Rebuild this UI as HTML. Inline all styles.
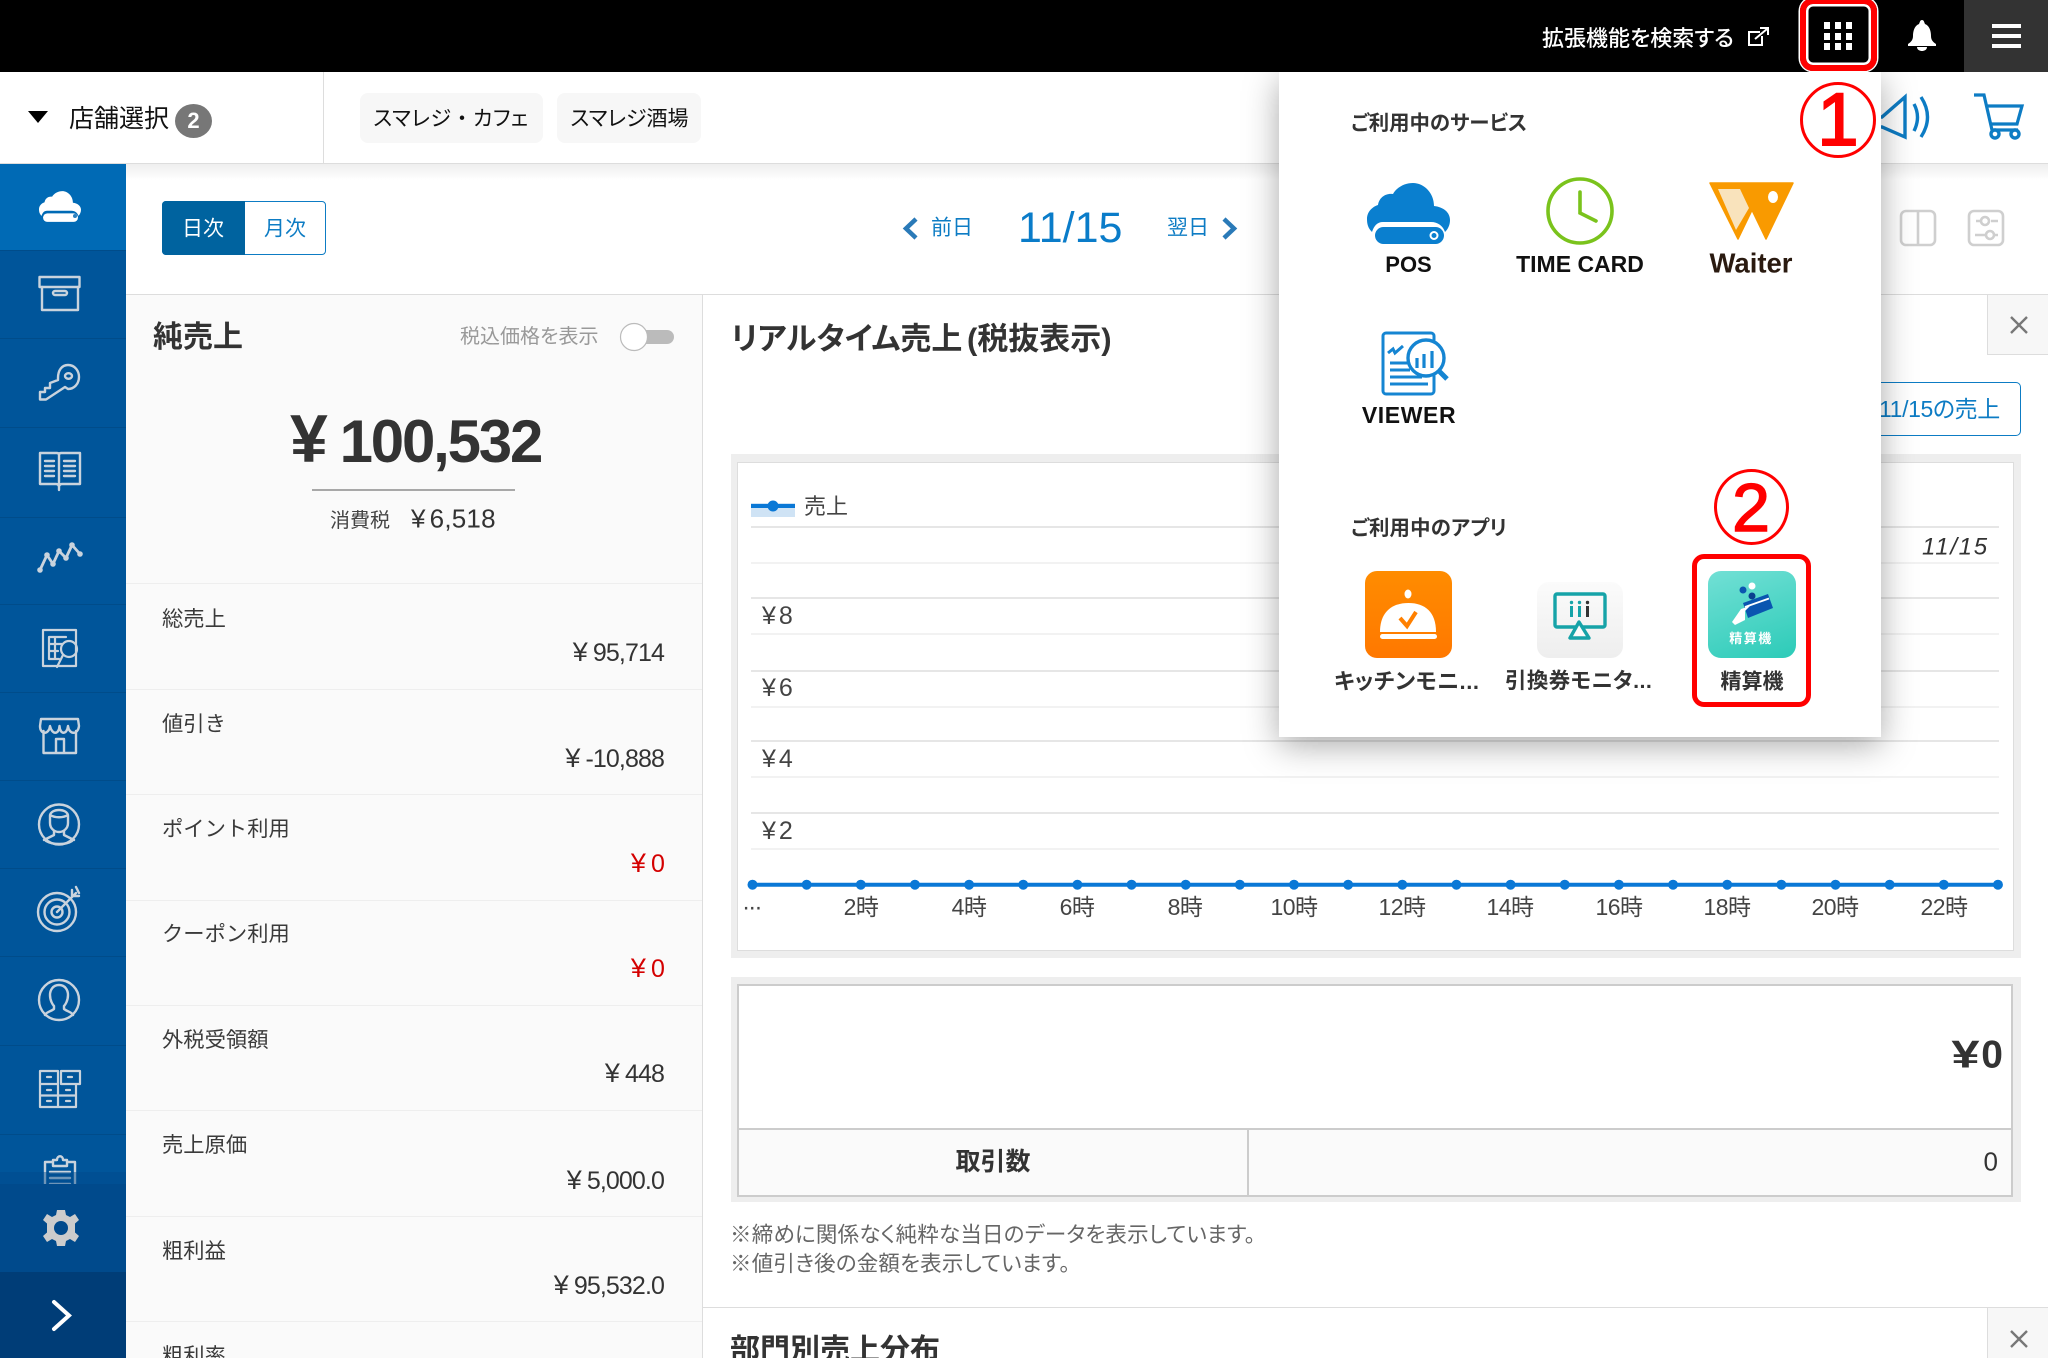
<!DOCTYPE html>
<html lang="ja"><head><meta charset="utf-8"><title>売上</title>
<style>
html,body{margin:0;padding:0;background:#fff}
#p{position:relative;width:2048px;height:1358px;overflow:hidden;background:#fff;font-family:"Liberation Sans","Noto Sans CJK JP",sans-serif;color:#333}
#p div,#p svg{position:absolute}
.t{position:absolute;white-space:nowrap;line-height:1.2;transform:translateY(-50%);font-feature-settings:"palt"}
.r{transform:translate(-100%,-50%)}
.c{transform:translate(-50%,-50%)}
.l{font-size:21.300px;left:162px;color:#3a3a3a;font-feature-settings:normal}
.v{font-size:25px;color:#333;letter-spacing:-.9px}
.v i{font-style:normal;font-size:27px;margin-right:6px}
.red{color:#d40000}
.g{font-size:23px;color:#444;letter-spacing:-.5px}
.n{font-size:25px;color:#444;letter-spacing:3px}
.b{font-weight:700}
</style></head><body><div id="p">
<div style="left:0;top:0;width:2048px;height:72px;background:#000"></div>
<div style="left:1964px;top:0;width:84px;height:72px;background:#333"></div>
<div style="left:0;top:72px;width:2048px;height:91px;background:#fff;border-bottom:1px solid #ddd"></div>
<div style="left:323px;top:72px;width:1px;height:91px;background:#ddd"></div>
<div style="left:360px;top:93px;width:183px;height:50px;background:#f7f7f7;border-radius:8px"></div>
<div style="left:557px;top:93px;width:144px;height:50px;background:#f7f7f7;border-radius:8px"></div>
<div style="left:126px;top:164px;width:1922px;height:16px;background:linear-gradient(#eee,#fff)"></div>
<div style="left:126px;top:294px;width:1922px;height:1px;background:#ddd"></div>
<div style="left:126px;top:295px;width:576px;height:1063px;background:#fafafa;border-right:1px solid #ddd"></div>
<div style="left:126px;top:583px;width:576px;height:1px;background:#eee"></div>
<div style="left:126px;top:689px;width:576px;height:1px;background:#eee"></div>
<div style="left:126px;top:794px;width:576px;height:1px;background:#eee"></div>
<div style="left:126px;top:900px;width:576px;height:1px;background:#eee"></div>
<div style="left:126px;top:1005px;width:576px;height:1px;background:#eee"></div>
<div style="left:126px;top:1110px;width:576px;height:1px;background:#eee"></div>
<div style="left:126px;top:1216px;width:576px;height:1px;background:#eee"></div>
<div style="left:126px;top:1321px;width:576px;height:1px;background:#eee"></div>
<div style="left:0;top:164px;width:126px;height:1194px;background:#00559a"></div>
<div style="left:0;top:164px;width:126px;height:86px;background:#006ab5"></div>
<div style="left:0;top:250px;width:126px;height:1px;background:#004c8a"></div>
<div style="left:0;top:338px;width:126px;height:1px;background:#004c8a"></div>
<div style="left:0;top:427px;width:126px;height:1px;background:#004c8a"></div>
<div style="left:0;top:517px;width:126px;height:1px;background:#004c8a"></div>
<div style="left:0;top:604px;width:126px;height:1px;background:#004c8a"></div>
<div style="left:0;top:692px;width:126px;height:1px;background:#004c8a"></div>
<div style="left:0;top:780px;width:126px;height:1px;background:#004c8a"></div>
<div style="left:0;top:868px;width:126px;height:1px;background:#004c8a"></div>
<div style="left:0;top:956px;width:126px;height:1px;background:#004c8a"></div>
<div style="left:0;top:1045px;width:126px;height:1px;background:#004c8a"></div>
<div style="left:0;top:1134px;width:126px;height:1px;background:#004c8a"></div>
<!-- segment -->
<div style="left:162px;top:201px;width:164px;height:54px;box-sizing:border-box;border:1px solid #0d7cc4;border-radius:4px;background:#fff"></div>
<div style="left:162px;top:201px;width:83px;height:54px;background:#00639f;border-radius:4px 0 0 4px"></div>
<!-- chart -->
<div style="left:731px;top:454px;width:1290px;height:504px;background:#eee"></div>
<div style="left:737px;top:462px;width:1275px;height:487px;background:#fff;border:1px solid #ddd"></div>
<div style="left:731px;top:977px;width:1290px;height:225px;background:#eee"></div>
<div style="left:737px;top:984px;width:1272px;height:144px;background:#fff;border:2px solid #ccc;border-bottom:none"></div>
<div style="left:737px;top:1128px;width:1272px;height:65px;background:#fafafa;border:2px solid #ccc"></div>
<div style="left:1247px;top:1128px;width:2px;height:67px;background:#ccc"></div>
<div style="left:703px;top:1307px;width:1345px;height:1px;background:#ddd"></div>
<div style="left:1987px;top:294px;width:61px;height:61px;box-sizing:border-box;background:#f7f7f7;border-left:1px solid #ddd;border-bottom:1px solid #ddd;border-top:1px solid #ddd"></div>
<div style="left:1987px;top:1307px;width:61px;height:51px;box-sizing:border-box;background:#f7f7f7;border-left:1px solid #ddd;border-top:1px solid #ddd"></div>
<div style="left:1800px;top:382px;width:221px;height:54px;box-sizing:border-box;background:#fff;border:1.500px solid #0d7cc4;border-radius:5px"></div>
<div style="left:751px;top:503px;width:44px;height:14px;background:#cfe3f5"></div>

<svg width="2048" height="1358" viewBox="0 0 2048 1358" style="left:0;top:0">
<defs><symbol id="cl" viewBox="0 0 83 61" overflow="visible"><path d="M5,49 C1,45 0,41 0,36 C0,29 5,24 11,22 C12,15 18,10 26,11 C30,4 38,0 46,0 C57,0 67,10 67,23 C76,24 83,29 83,37 C83,42 81,46 78,49 C76,43 71,39 64,39 L16,39 C10,39 7,43 5,49 Z"/><rect x="8" y="44" width="69" height="17" rx="8.500"/></symbol></defs>
<g fill="none" stroke-width="1.500">
<path d="M751 527H1999M751 598H1999M751 671H1999M751 741H1999M751 813H1999" stroke="#ddd"/>
<path d="M751 563H1999M751 634H1999M751 707H1999M751 777H1999M751 849H1999" stroke="#eee"/>
</g>
<path d="M751 506H795" stroke="#0a78d6" stroke-width="4"/><circle cx="773" cy="506" r="5.500" fill="#0a78d6"/>
<path d="M752.500 884.700H2000" stroke="#0a78d6" stroke-width="4"/>
<path d="M752.500 884.700H2001" stroke="#0a78d6" stroke-width="10" stroke-linecap="round" stroke-dasharray="0 54.150"/>
<path d="M2011 317L2027 333M2027 317L2011 333M2011 1331L2027 1347M2027 1331L2011 1347" stroke="#777" stroke-width="2.400" fill="none"/>
<g fill="none" stroke="#cfcfcf" stroke-width="2.600">
<rect x="1901" y="211" width="34" height="34" rx="5"/><path d="M1918 211V245"/>
<rect x="1969" y="211" width="34" height="34" rx="5"/><path d="M1976 221H1981M1991 221H1998M1975 235H1985M1995 235H1998"/><circle cx="1985" cy="221" r="4"/><circle cx="1990" cy="235" r="4"/>
</g>
<!-- nav chevrons -->
<path d="M916 219L906 228.500L916 238M1224 219L1234 228.500L1224 238" fill="none" stroke="#2a7ab8" stroke-width="4.500"/>
<!-- speaker + cart -->
<g fill="none" stroke="#0d7cc4" stroke-width="3.400">
<path d="M1870 117H1882L1905 97V137L1882 127H1870"/><path d="M1914 104Q1921 117 1914 131M1921 97Q1934 117 1921 137"/>
<path d="M1974 95H1984L1992 130H2018M1986 106H2022L2017 124H1990" stroke-width="3.200"/><circle cx="1995" cy="134" r="4"/><circle cx="2015" cy="134" r="4"/>
</g>
<!-- topbar icons -->
<path d="M1760 32H1749V45H1762V36M1755 39L1767 29M1760 28H1768V35" fill="none" stroke="#fff" stroke-width="2"/>
<g fill="#fff"><rect x="1824" y="22" width="6" height="7"/><rect x="1835" y="22" width="6" height="7"/><rect x="1846" y="22" width="6" height="7"/><rect x="1824" y="33" width="6" height="7"/><rect x="1835" y="33" width="6" height="7"/><rect x="1846" y="33" width="6" height="7"/><rect x="1824" y="43" width="6" height="7"/><rect x="1835" y="43" width="6" height="7"/><rect x="1846" y="43" width="6" height="7"/>
<path d="M1922 20C1924 20 1924 22 1925 24C1930 26 1931 32 1931 36C1931 40 1933 42 1936 44V46H1908V44C1911 42 1913 40 1913 36C1913 32 1914 26 1919 24C1920 22 1920 20 1922 20ZM1917 47H1927C1927 50 1924 51 1922 51C1920 51 1917 50 1917 47Z"/>
<rect x="1992" y="24" width="29" height="4"/><rect x="1992" y="34" width="29" height="4"/><rect x="1992" y="44" width="29" height="4"/></g>
<path d="M28 111H48L38 123Z" fill="#000"/>
<!-- toggle -->
<rect x="630" y="330" width="44" height="14" rx="7" fill="#bbb"/><circle cx="634" cy="337" r="13.500" fill="#fff" stroke="#bbb" stroke-width="1.200"/>
<path d="M312 490H515" stroke="#777" stroke-width="1.300"/>
<!-- sidebar -->
<use href="#cl" x="39" y="191" width="42" height="31" fill="#fff"/><circle cx="75" cy="216" r="2" fill="#2a80c0"/>
<g fill="none" stroke="#c9d3dd" stroke-width="2.400" stroke-linejoin="round" stroke-linecap="round">
<rect x="39.500" y="277" width="40" height="10"/><path d="M42 287V310H78V287"/><rect x="53" y="291" width="14" height="4" rx="2"/>
<path d="M58 378C58 370 62 365 68 365C75 365 79 371 79 377C79 384 74 389 68 389L65 387L46 399.500H40V392H45V388H50V383L58 380Z"/><ellipse cx="68.500" cy="376" rx="3.500" ry="2.800"/>
<path d="M40 453H57Q59 453 59 455Q59 453 61 453H80V484H62Q59 484 59 487Q59 484 56 484H40ZM59 455V490M45 461H54M45 466H54M45 471H54M45 476H54M64 461H75M64 466H75M64 471H75M64 476H75"/>
<path d="M40 570L47 555L53 564L59 551L66 558L72 545L80 554" stroke-width="2.800"/><g fill="#c9d3dd" stroke="none"><circle cx="40" cy="570" r="2.800"/><circle cx="47" cy="555" r="2.800"/><circle cx="53" cy="564" r="2.800"/><circle cx="59" cy="551" r="2.800"/><circle cx="66" cy="558" r="2.800"/><circle cx="72" cy="545" r="2.800"/><circle cx="80" cy="554" r="2.800"/></g>
<g stroke-width="2.200"><rect x="43" y="630" width="33" height="36"/><path d="M49 637H66M49 637V659H59M49 644H62M49 651H58M55 637V658"/><circle cx="69" cy="649" r="8"/><path d="M63 655L57 667"/></g>
<path d="M41 719H78L79 726C78 735 69 735 68 726C67 735 60 735 59.500 726C59 735 52 735 50 726C49 735 40 735 40 726ZM43.500 731V753H76V731M56 753V739H64V753"/>
<circle cx="59" cy="824.500" r="20"/><path d="M50 816C50 808 68 808 68 816V823C68 829 63 832 59 832C55 832 50 829 50 823ZM50 815C55 818 63 818 68 815M54 831V835L44 840M64 831V835L74 840M46 841C53 845 66 845 72 841"/>
<circle cx="57" cy="912" r="19"/><circle cx="57" cy="912" r="12.500"/><circle cx="57" cy="912" r="5.500"/><path d="M57 912L76 893M72 890V896H79M76 887L79 893" />
<circle cx="59" cy="1000" r="20"/><path d="M59 985C53 985 50 990 50 995C50 1001 53 1005 54 1006V1009C50 1012 46 1012 45 1015M59 985C65 985 68 990 68 995C68 1001 65 1005 64 1006V1009C68 1012 72 1012 73 1015"/>
<path d="M40 1071H58V1084H40ZM61 1071H80V1084H61ZM40 1084V1107H76V1084M58 1084V1107M40 1095.500H76M47 1077H51M68 1077H72M47 1090H51M66 1090H70M47 1101H51M66 1101H70" stroke-width="2.200"/>
<path d="M53 1162H45V1190H75V1162H67M53 1166H67V1160H63C63 1155 57 1155 57 1160H53ZM50 1172H70M50 1178H70M50 1184H70"/>
</g>
<g><rect y="1184" width="126" height="88" fill="#004a8c"/><rect y="1272" width="126" height="86" fill="#003d77"/>
<rect y="1172" width="126" height="12" fill="#004a8c" opacity=".45"/>
<g transform="translate(61 1228)"><path d="M-4-18H4L5-13 9-11 14-14 18-8 14-4.500V4.500L18 8 14 14 9 11 5 13 4 18H-4L-5 13-9 11-14 14-18 8-14 4.500V-4.500L-18-8-14-14-9-11-5-13Z" fill="#ccc"/><circle r="7" fill="#004a8c"/></g>
<path d="M54 1302L69 1315.500L54 1329" fill="none" stroke="#fff" stroke-width="4" stroke-linecap="round"/></g>
</svg>

<span class="t" style="left:1542px;top:39px;font-size:22px;color:#fff;font-weight:500">拡張機能を検索する</span>
<span class="t" style="left:69px;top:119px;font-size:25px;color:#111">店舗選択</span>
<div style="left:175px;top:104px;width:37px;height:34px;border-radius:50%;background:#777"></div>
<span class="t c b" style="left:193.500px;top:121px;font-size:22px;color:#fff">2</span>
<span class="t c" style="left:451px;top:119px;font-size:21px;color:#111;letter-spacing:.5px">スマレジ<span style="font-feature-settings:normal">・</span>カフェ</span>
<span class="t c" style="left:629.500px;top:119px;font-size:21px;color:#111">スマレジ酒場</span>
<span class="t c" style="left:203px;top:229px;font-size:21px;color:#fff">日次</span>
<span class="t c" style="left:285px;top:229px;font-size:21px;color:#0d7cc4">月次</span>
<span class="t" style="left:931px;top:228px;font-size:21px;color:#0d7cc4">前日</span>
<span class="t" style="left:1018px;top:229px;font-size:43px;color:#0a7cc9">11/15</span>
<span class="t" style="left:1167px;top:228px;font-size:21px;color:#0d7cc4">翌日</span>
<span class="t b" style="left:153px;top:338px;font-size:30px;color:#333">純売上</span>
<span class="t" style="left:460px;top:337px;font-size:20px;color:#999">税込価格を表示</span>
<span class="t b" style="left:290px;top:439px;font-size:60px;letter-spacing:-2.200px;color:#333;line-height:1"><span style="font-size:68px;margin-right:14px">¥</span>100,532</span>
<span class="t" style="left:330px;top:521px;font-size:20px;color:#444">消費税</span>
<span class="t" style="left:411px;top:519px;font-size:26px;color:#333;letter-spacing:.2px"><span style="margin-right:4px">¥</span>6,518</span>
<span class="t l" style="top:620px">総売上</span><span class="t r v" style="left:664px;top:652px"><i>¥</i>95,714</span>
<span class="t l" style="top:725px">値引き</span><span class="t r v" style="left:664px;top:758px"><i>¥</i>-10,888</span>
<span class="t l" style="top:830px">ポイント利用</span><span class="t r v red" style="left:664px;top:863px"><i>¥</i>0</span>
<span class="t l" style="top:935px">クーポン利用</span><span class="t r v red" style="left:664px;top:968px"><i>¥</i>0</span>
<span class="t l" style="top:1041px">外税受領額</span><span class="t r v" style="left:664px;top:1073px"><i>¥</i>448</span>
<span class="t l" style="top:1146px">売上原価</span><span class="t r v" style="left:664px;top:1180px"><i>¥</i>5,000.0</span>
<span class="t l" style="top:1252px">粗利益</span><span class="t r v" style="left:664px;top:1285px"><i>¥</i>95,532.0</span>
<span class="t l" style="top:1357px">粗利率</span>
<span class="t b" style="left:731px;top:339px;font-size:31px;color:#333;word-spacing:-4px">リアルタイム売上 (税抜表示)</span>
<span class="t" style="left:1879px;top:410px;font-size:23px;color:#0d7cc4;letter-spacing:-.4px">11/15の売上</span>
<span class="t" style="left:804px;top:507px;font-size:22px;color:#444">売上</span>
<span class="t n" style="left:762px;top:616px">¥8</span><span class="t n" style="left:762px;top:688px">¥6</span><span class="t n" style="left:762px;top:759px">¥4</span><span class="t n" style="left:762px;top:831px">¥2</span>
<span class="t" style="left:1922px;top:548px;font-size:24px;font-style:italic;color:#333;letter-spacing:1.700px">11/15</span>
<span class="t g c" style="left:752px;top:903px;font-size:24px">...</span>
<span class="t g c" style="left:861px;top:908px">2時</span><span class="t g c" style="left:969px;top:908px">4時</span><span class="t g c" style="left:1077px;top:908px">6時</span><span class="t g c" style="left:1185px;top:908px">8時</span><span class="t g c" style="left:1294px;top:908px">10時</span><span class="t g c" style="left:1402px;top:908px">12時</span><span class="t g c" style="left:1510px;top:908px">14時</span><span class="t g c" style="left:1619px;top:908px">16時</span><span class="t g c" style="left:1727px;top:908px">18時</span><span class="t g c" style="left:1835px;top:908px">20時</span><span class="t g c" style="left:1944px;top:908px">22時</span>
<span class="t r b" style="left:2003px;top:1056px;font-size:39px;color:#333"><span style="display:inline-block;transform:scaleX(1.300);margin:0 5px 0 0">¥</span>0</span>
<span class="t c b" style="left:993px;top:1162px;font-size:25px;color:#333">取引数</span>
<span class="t r" style="left:1998px;top:1162px;font-size:26px;color:#333">0</span>
<span class="t" style="left:730px;top:1236px;font-size:21.500px;letter-spacing:.2px;color:#666">※締めに関係なく純粋な当日のデータを表示しています。</span>
<span class="t" style="left:730px;top:1265px;font-size:21.500px;letter-spacing:.2px;color:#666">※値引き後の金額を表示しています。</span>
<span class="t b" style="left:730px;top:1351px;font-size:30px;color:#333">部門別売上分布</span>

<!-- popup -->
<div style="left:1279px;top:72px;width:602px;height:665px;background:#fff;box-shadow:0 8px 32px rgba(0,0,0,.34)"></div>
<div style="left:1708px;top:571px;width:88px;height:87px;border-radius:13px;background:linear-gradient(160deg,#72e0d5,#2ccbb8)"></div>
<div style="left:1365px;top:571px;width:87px;height:87px;border-radius:12px;background:linear-gradient(#ff8c00,#ff7800)"></div>
<div style="left:1537px;top:582px;width:86px;height:76px;border-radius:12px;background:linear-gradient(#fbfbfb,#eee)"></div>
<svg width="2048" height="1358" viewBox="0 0 2048 1358" style="left:0;top:0">
<use href="#cl" x="1367" y="183" width="83" height="61" fill="#0a7fcf"/><circle cx="1434" cy="235.500" r="3.500" fill="none" stroke="#fff" stroke-width="2"/>
<circle cx="1580" cy="211" r="32" fill="none" stroke="#7ac31c" stroke-width="3.600"/><path d="M1580 192V213L1596 221" fill="none" stroke="#7ac31c" stroke-width="3.600" stroke-linecap="round"/>
<g transform="translate(1710 183)"><path d="M0 0H83L56 56L42 27L28 56Z" fill="#f99a00" stroke="#f99a00" stroke-width="1.500" stroke-linejoin="round"/><path d="M8 6H30L39 25L26 47Z" fill="#f9e3bc"/><ellipse cx="63" cy="14" rx="5" ry="6" fill="#fff"/></g>
<g fill="none" stroke="#1585d2" stroke-width="3"><rect x="1383" y="333" width="51" height="61" rx="3"/><path d="M1388 353L1393 349L1395 353L1403 346M1390 363H1412M1390 370H1410M1390 377H1422M1390 384H1428" /><circle cx="1426" cy="358" r="18" fill="#fff" stroke-width="3.400"/><path d="M1439 371L1447 379" stroke-width="5"/><path d="M1417 368V358M1424 368V354M1432 368V351" stroke-width="3.200"/></g>
<g fill="#fff"><ellipse cx="1408" cy="594" rx="3.500" ry="4.500"/><path d="M1380 632C1380 612 1392 603 1408.500 603C1425 603 1436 612 1436 632H1380Z"/><rect x="1380" y="634" width="57" height="5" rx="2.500"/></g>
<path d="M1400 618L1407 626L1416 612" fill="none" stroke="#ff8000" stroke-width="4"/>
<g fill="none" stroke="#16a3a8" stroke-width="3.400"><rect x="1555" y="594" width="50" height="33" rx="2"/><path d="M1579 622L1570 638H1589Z" fill="#fbfbfb" stroke-linejoin="round"/></g>
<g fill="#16a3a8"><rect x="1570" y="606" width="3" height="11"/><rect x="1578" y="606" width="3" height="11"/><circle cx="1571.500" cy="602.500" r="1.700"/><circle cx="1579.500" cy="602.500" r="1.700"/></g><rect x="1586" y="606" width="3" height="11" fill="#333"/><circle cx="1587.500" cy="602.500" r="1.700" fill="#333"/>
<circle cx="1752" cy="586" r="3.500" fill="#fff"/><circle cx="1743" cy="590" r="3.500" fill="#0a55b0"/><circle cx="1752" cy="596" r="3.500" fill="#0a3f8f"/>
<path d="M1743 603L1768 594L1773 608L1748 618Z" fill="#0a55b0"/><path d="M1745 607L1769 598.500" stroke="#fff" stroke-width="1.800"/>
<path d="M1732 622L1741 609L1750 606L1745 611L1745 620L1735 625Z" fill="#fff"/>
</svg>
<span class="t b" style="left:1351px;top:124px;font-size:20.400px;color:#333">ご利用中のサービス</span>
<span class="t c b" style="left:1408.500px;top:265px;font-size:22px;color:#111">POS</span>
<span class="t c b" style="left:1580px;top:265px;font-size:23px;color:#111">TIME CARD</span>
<span class="t c b" style="left:1751px;top:263px;font-size:27.500px;color:#2a1a10">Waiter</span>
<span class="t c b" style="left:1409px;top:416px;font-size:23px;letter-spacing:.6px;color:#111">VIEWER</span>
<span class="t b" style="left:1351px;top:529px;font-size:20.400px;letter-spacing:.2px;color:#333">ご利用中のアプリ</span>
<span class="t c b" style="left:1751px;top:639px;font-size:13px;color:#fff;letter-spacing:1.500px">精算機</span>
<span class="t b" style="left:1334px;top:682px;font-size:22px;letter-spacing:.6px;color:#333">キッチンモニ...</span>
<span class="t b" style="left:1505px;top:682px;font-size:21.500px;letter-spacing:.4px;color:#333">引換券モニタ...</span>
<span class="t c b" style="left:1752px;top:682px;font-size:21px;color:#333">精算機</span>
<!-- annotations -->
<div style="left:1800px;top:-2px;width:77px;height:73px;box-sizing:border-box;border:6.500px solid #f00;border-radius:13px;box-shadow:inset 0 0 0 2.500px #fff,0 0 0 1.500px #fff"></div>
<div style="left:1692px;top:554px;width:119px;height:153px;box-sizing:border-box;border:5px solid #f00;border-radius:12px"></div>
<div style="left:1800px;top:82px;width:76px;height:76px;box-sizing:border-box;border:3px solid #f00;border-radius:50%;background:#fff"></div>
<span class="t c" style="left:1838px;top:120px;font-size:74px;color:#f00;line-height:1;-webkit-text-stroke:2px #f00">1</span>
<div style="left:1714px;top:469px;width:75px;height:76px;box-sizing:border-box;border:3px solid #f00;border-radius:50%;background:#fff"></div>
<span class="t c" style="left:1751px;top:508px;font-size:68px;color:#f00;line-height:1;-webkit-text-stroke:1.500px #f00">2</span>
</div></body></html>
